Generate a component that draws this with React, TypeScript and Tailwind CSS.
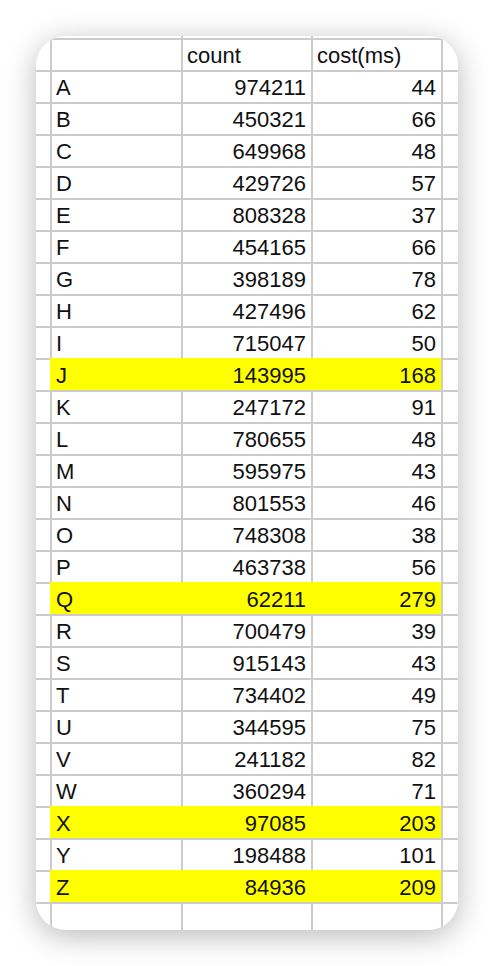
const rows: [string, number, number][] = [
  ['A', 974211, 44],
  ['B', 450321, 66],
  ['C', 649968, 48],
  ['D', 429726, 57],
  ['E', 808328, 37],
  ['F', 454165, 66],
  ['G', 398189, 78],
  ['H', 427496, 62],
  ['I', 715047, 50],
  ['J', 143995, 168],
  ['K', 247172, 91],
  ['L', 780655, 48],
  ['M', 595975, 43],
  ['N', 801553, 46],
  ['O', 748308, 38],
  ['P', 463738, 56],
  ['Q', 62211, 279],
  ['R', 700479, 39],
  ['S', 915143, 43],
  ['T', 734402, 49],
  ['U', 344595, 75],
  ['V', 241182, 82],
  ['W', 360294, 71],
  ['X', 97085, 203],
  ['Y', 198488, 101],
  ['Z', 84936, 209],
]

function Row({
  cells,
  hi = false,
  h = 'h-[32px]',
  top = true,
  head = false,
}: {
  cells: [string, string, string]
  hi?: boolean
  h?: string
  top?: boolean
  head?: boolean
}) {
  const line = hi ? 'border-[#ffff00]' : 'border-[#cccccc]'
  const fill = hi ? 'bg-[#ffff00]' : ''
  const num = head ? 'pl-[4px] text-left' : 'pr-[5px] text-right'
  return (
    <div className={`flex ${h} ${top ? 'border-t-2' : ''} ${line} ${fill} leading-[31px]`}>
      <div className={`w-[14px] shrink-0 bg-white ${top ? '-mt-[2px] border-t-2 border-[#cccccc]' : ''}`} />
      <div className={`w-[131px] shrink-0 border-l-2 ${line} pl-[4px] text-left`}>{cells[0]}</div>
      <div className={`w-[130px] shrink-0 border-l-2 ${line} ${num}`}>{cells[1]}</div>
      <div className={`w-[130px] shrink-0 border-l-2 ${line} ${num}`}>{cells[2]}</div>
      <div className={`flex-1 border-l-2 border-[#cccccc] bg-white ${top ? '-mt-[2px] border-t-2' : ''}`} />
    </div>
  )
}

export default function App() {
  return (
    <div className="w-[494px] h-[966px] bg-white p-[36px]">
      <div
        className="w-[422px] h-[894px] rounded-[30px] bg-white overflow-hidden shadow-[0_6px_30px_rgba(0,0,0,0.28)] text-[22px] text-[#111]"
        style={{ fontFamily: '"Liberation Sans", Arial, sans-serif' }}
      >
        <Row cells={['', '', '']} h="h-[2px]" top={false} />
        <Row cells={['', 'count', 'cost(ms)']} head />
        {rows.map(([k, c, ms]) => (
          <Row key={k} cells={[k, String(c), String(ms)]} hi={ms > 150} />
        ))}
        <Row cells={['', '', '']} h="h-[40px]" />
      </div>
    </div>
  )
}
